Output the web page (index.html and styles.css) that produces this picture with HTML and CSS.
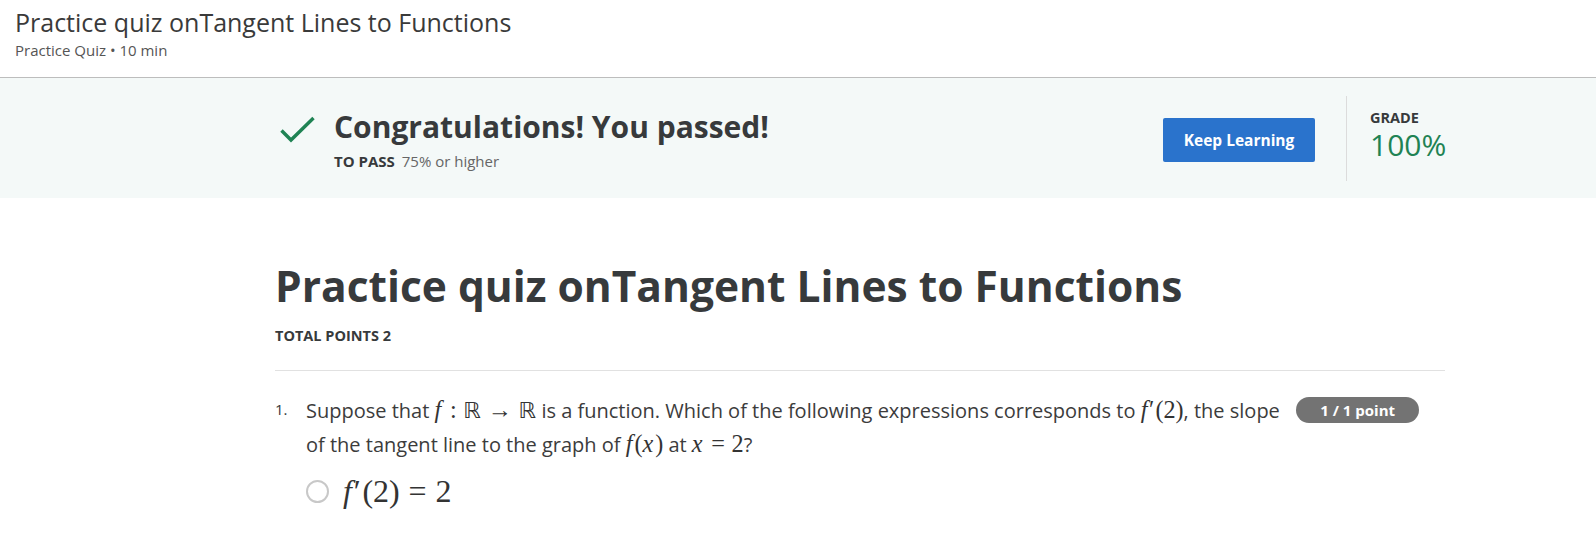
FILE: index.html
```html
<!DOCTYPE html>
<html lang="en">
<head>
<meta charset="utf-8">
<title>Practice quiz onTangent Lines to Functions</title>
<link rel="stylesheet" href="styles.css">
</head>
<body>
<header class="top">
  <div class="top-title">Practice quiz onTangent Lines to Functions</div>
  <div class="top-meta">Practice Quiz • 10 min</div>
</header>
<section class="band">
  <div class="band-inner">
    <div class="result">
      <svg class="check" width="38" height="30" viewBox="0 0 38 30" aria-hidden="true">
        <polyline points="2.5,14.5 12,24 34.5,2" fill="none" stroke="#1f8354" stroke-width="3.4"/>
      </svg>
      <div class="result-text">
        <div class="result-title">Congratulations! You passed!</div>
        <div class="result-pass"><span class="pass-label">TO PASS</span> 75% or higher</div>
      </div>
    </div>
    <button class="btn">Keep Learning</button>
    <div class="grade">
      <div class="grade-label">GRADE</div>
      <div class="grade-value">100%</div>
    </div>
  </div>
</section>
<main class="content">
  <h1 class="quiz-title">Practice quiz onTangent Lines to Functions</h1>
  <div class="total">TOTAL POINTS 2</div>
  <hr class="rule">
  <div class="question">
    <div class="qnum">1.</div>
    <div class="qbody">
      <div class="qrow">
        <p class="qtext">Suppose that <span class="m"><i>f</i><span class="rel">:</span><span class="bb">ℝ</span><span class="rel">→</span><span class="bb">ℝ</span></span> is a function. Which of the following expressions corresponds to <span class="m"><i>f</i><span class="pr">′</span>(2)</span>, the slope of the tangent line to the graph of <span class="m"><i>f</i>(<i>x</i>)</span> at <span class="m"><i>x</i><span class="rel">=</span>2</span>?</p>
        <span class="badge">1 / 1 point</span>
      </div>
      <label class="option">
        <span class="radio"></span>
        <span class="m opt"><i>f</i><span class="pr">′</span>(2)<span class="rel">=</span>2</span>
      </label>
    </div>
  </div>
</main>
</body>
</html>
```
FILE: styles.css
```css
* { box-sizing: border-box; }
html, body { margin: 0; padding: 0; background: #fff; }
body {
  font-family: "Open Sans", "Noto Sans", sans-serif;
  color: #373a3c;
  overflow: hidden;
}
.top {
  padding: 4px 15px 0;
  height: 78px;
  border-bottom: 1px solid #bdbdbd;
}
.top-title {
  font-size: 25px;
  line-height: 36px;
  color: #3a3a3a;
}
.top-meta {
  font-size: 15px;
  line-height: 20px;
  color: #555;
}
.band {
  background: #f4f9f8;
  height: 120px;
}
.band-inner {
  margin-left: 275px;
  width: 1170px;
  height: 120px;
  display: flex;
  align-items: center;
}
.result {
  flex: 1;
  display: flex;
  align-items: flex-start;
  padding-top: 2px;
}
.check { margin: 9px 0 0 4px; flex: none; }
.result-text { margin-left: 17px; }
.result-title {
  font-size: 30px;
  font-weight: 700;
  line-height: 40px;
  color: #373a3c;
}
.result-pass {
  margin-top: 4px;
  font-size: 15px;
  line-height: 20px;
  color: #666;
}
.pass-label {
  font-weight: 700;
  color: #373a3c;
  margin-right: 3px;
}
.btn {
  font-family: inherit;
  width: 152px;
  height: 44px;
  border: 0;
  border-radius: 2px;
  background: #2a73cc;
  color: #fff;
  font-size: 15.5px;
  font-weight: 700;
  margin-top: 4px;
}
.grade {
  margin-left: 31px;
  height: 85px;
  border-left: 1px solid #dcdcdc;
  padding: 13px 0 0 23px;
  width: 99px;
}
.grade-label {
  font-size: 14.5px;
  font-weight: 700;
  line-height: 18px;
  color: #373a3c;
}
.grade-value {
  font-size: 30px;
  line-height: 36px;
  color: #1f8354;
}
.content {
  margin-left: 275px;
  width: 1170px;
  padding-top: 56px;
}
.quiz-title {
  margin: 0;
  font-size: 42.5px;
  font-weight: 700;
  line-height: 64px;
  color: #373a3c;
}
.total {
  margin-top: 8px;
  font-size: 14.5px;
  font-weight: 700;
  line-height: 20px;
}
.rule {
  margin: 24px 0 0;
  border: 0;
  border-top: 1px solid #e1e1e1;
}
.question {
  display: flex;
  padding-top: 22px;
}
.qnum {
  width: 31px;
  font-size: 15px;
  line-height: 33px;
}
.qbody { flex: 1; }
.qrow { display: flex; align-items: flex-start; }
.qtext {
  margin: 0;
  flex: 1;
  font-size: 20px;
  line-height: 33px;
  color: #3c3c3c;
}
.m {
  font-family: "Liberation Serif", "DejaVu Serif", serif;
  font-size: 1.21em;
  white-space: nowrap;
  color: #333;
}
.m i { margin-right: 0.08em; }
.pr { margin-left: -0.02em; margin-right: 0.05em; }
.rel { margin: 0 0.2778em; }
.bb { font-family: "DejaVu Sans", sans-serif; font-size: 0.92em; }
.badge {
  flex: none;
  margin: 4px 26px 0 4px;
  height: 26px;
  padding: 0 24px;
  border-radius: 13px;
  background: #737373;
  color: #fff;
  font-size: 15px;
  font-weight: 700;
  line-height: 26px;
}
.option {
  display: flex;
  align-items: center;
  margin-top: 12px;
}
.radio {
  width: 23px;
  height: 23px;
  border: 2px solid #c8c8c8;
  border-radius: 50%;
  margin-left: 0;
}
.opt { margin-left: 14px; font-size: 32px; }
```
